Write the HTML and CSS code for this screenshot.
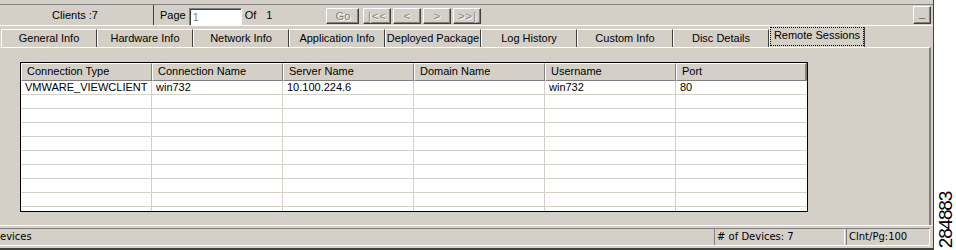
FILE: index.html
```html
<!DOCTYPE html>
<html>
<head>
<meta charset="utf-8">
<link rel="stylesheet" href="styles.css">
</head>
<body>
<div class="screen">
  <div class="app">
    <div class="toolbar">
      <div class="clients">Clients :7</div>
      <div class="pager">
        <span class="lbl">Page</span>
        <div class="pageinput">1</div>
        <span class="of">Of</span>
        <span class="total">1</span>
        <div class="navbtns">
          <div class="btn go">Go</div>
          <div class="btn">|&lt;&lt;</div>
          <div class="btn">&lt;</div>
          <div class="btn">&gt;</div>
          <div class="btn">&gt;&gt;|</div>
        </div>
      </div>
      <div class="minbtn"><span class="mintxt">_</span></div>
    </div>
    <div class="tabs">
      <div class="tab">General Info</div>
      <div class="tab">Hardware Info</div>
      <div class="tab">Network Info</div>
      <div class="tab">Application Info</div>
      <div class="tab">Deployed Package</div>
      <div class="tab">Log History</div>
      <div class="tab">Custom Info</div>
      <div class="tab">Disc Details</div>
      <div class="tab active"><span class="focus">Remote Sessions</span></div>
    </div>
    <div class="panel">
      <div class="grid">
        <div class="row head">
          <div class="hc">Connection Type</div>
          <div class="hc">Connection Name</div>
          <div class="hc">Server Name</div>
          <div class="hc">Domain Name</div>
          <div class="hc">Username</div>
          <div class="hc">Port</div>
        </div>
        <div class="row"><div class="c">VMWARE_VIEWCLIENT</div><div class="c">win732</div><div class="c">10.100.224.6</div><div class="c"></div><div class="c">win732</div><div class="c">80</div></div>
        <div class="row"><div class="c"></div><div class="c"></div><div class="c"></div><div class="c"></div><div class="c"></div><div class="c"></div></div>
        <div class="row"><div class="c"></div><div class="c"></div><div class="c"></div><div class="c"></div><div class="c"></div><div class="c"></div></div>
        <div class="row"><div class="c"></div><div class="c"></div><div class="c"></div><div class="c"></div><div class="c"></div><div class="c"></div></div>
        <div class="row"><div class="c"></div><div class="c"></div><div class="c"></div><div class="c"></div><div class="c"></div><div class="c"></div></div>
        <div class="row"><div class="c"></div><div class="c"></div><div class="c"></div><div class="c"></div><div class="c"></div><div class="c"></div></div>
        <div class="row"><div class="c"></div><div class="c"></div><div class="c"></div><div class="c"></div><div class="c"></div><div class="c"></div></div>
        <div class="row"><div class="c"></div><div class="c"></div><div class="c"></div><div class="c"></div><div class="c"></div><div class="c"></div></div>
        <div class="row"><div class="c"></div><div class="c"></div><div class="c"></div><div class="c"></div><div class="c"></div><div class="c"></div></div>
        <div class="row"><div class="c"></div><div class="c"></div><div class="c"></div><div class="c"></div><div class="c"></div><div class="c"></div></div>
      </div>
    </div>
    <div class="statuswrap">
      <div class="status">
        <div class="st-main">evices</div>
        <div class="st-cell devices"># of Devices: 7</div>
        <div class="st-cell perpage">Clnt/Pg:100</div>
      </div>
    </div>
  </div>
  <div class="fig"><span>284883</span></div>
</div>
</body>
</html>
```
FILE: styles.css
```css
* { box-sizing: border-box; margin: 0; padding: 0; }
body {
  margin: 0;
  background: #fff;
  font-family: "Liberation Sans", Arial, sans-serif;
  font-size: 11px;
  color: #000;
}
.screen { display: flex; width: 956px; height: 250px; }
.app {
  width: 934px;
  height: 250px;
  background: #d4d0c8;
  display: flex;
  flex-direction: column;
  border-right: 1px solid #404040;
}
.fig {
  flex: 1;
  display: flex;
  align-items: flex-end;
  justify-content: center;
  padding-bottom: 2px;
}
.fig span {
  writing-mode: vertical-rl;
  transform: rotate(180deg);
  font-family: "Liberation Sans", Arial, sans-serif;
  font-size: 19px;
  letter-spacing: -1.2px;
  line-height: 1;
}

/* toolbar */
.toolbar {
  margin-top: 4px;
  height: 22px;
  border-top: 1px solid #808080;
  border-bottom: 1px solid #fff;
  display: flex;
  align-items: stretch;
}
.clients {
  width: 154px;
  border-right: 1px solid #404040;
  display: flex;
  align-items: center;
  justify-content: center;
  padding-right: 3px;
}
.pager {
  display: flex;
  align-items: center;
  padding-left: 6px;
}
.pageinput {
  margin-left: 3px;
  margin-top: 4px;
  width: 53px;
  height: 18px;
  background: #fff;
  border-style: solid;
  border-width: 1px;
  border-color: #808080 #fff #fff #808080;
  box-shadow: inset 1px 1px #404040;
  color: #808080;
  padding-left: 3px;
  line-height: 17px;
}
.of { margin-left: 3px; }
.total { margin-left: 10px; }
.navbtns {
  display: flex;
  gap: 2px;
  margin-left: 54px;
  margin-top: 1px;
}
.btn {
  width: 28px;
  height: 16px;
  border-style: solid;
  border-width: 1px;
  border-color: #fff #404040 #404040 #fff;
  box-shadow: inset -1px -1px #808080;
  color: #808080;
  text-shadow: 1px 1px #fff;
  display: flex;
  align-items: center;
  justify-content: center;
  letter-spacing: 1px;
}
.btn.go { width: 33px; margin-right: 2px; letter-spacing: 0; }
.minbtn {
  margin-left: auto;
  margin-right: 2px;
  margin-top: 1px;
  width: 18px;
  height: 18px;
  border-style: solid;
  border-width: 1px;
  border-color: #fff #404040 #404040 #fff;
  box-shadow: inset -1px -1px #808080;
  display: flex;
  justify-content: center;
  overflow: hidden;
}
.mintxt {
  display: block;
  font-weight: bold;
  font-size: 11px;
  line-height: 11px;
  margin-top: 1px;
}

/* tabs */
.tabs {
  height: 21px;
  display: flex;
  align-items: flex-end;
  padding-left: 1px;
}
.tab {
  width: 96px;
  height: 18px;
  border-top: 1px solid #fff;
  border-left: 1px solid #fff;
  border-right: 1px solid #404040;
  text-align: center;
  line-height: 17px;
  white-space: nowrap;
  overflow: hidden;
}
.tab.active {
  height: 20px;
  border-top: none;
  padding-bottom: 1px;
}
.tab.active .focus {
  display: block;
  height: 19px;
  border: 1px dotted #000;
  line-height: 15px;
}

/* panel */
.panel {
  height: 178px;
  border-top: 1px solid #fff;
  border-right: 2px solid #808080;
  margin-right: 2px;
  padding: 14px 0 0 20px;
}
.grid {
  width: 788px;
  height: 150px;
  border: 1px solid #000;
  background: #fff;
  overflow: hidden;
}
.row {
  display: grid;
  grid-template-columns: repeat(6, 131px);
  height: 14px;
}
.row.head {
  height: 18px;
  background: #d4d0c8;
}
.hc {
  border-style: solid;
  border-width: 1px;
  border-color: #fff #808080 #808080 #fff;
  padding-left: 5px;
  line-height: 15px;
  white-space: nowrap;
  overflow: hidden;
}
.hc:last-child { border-right: 2px solid #808080; }
.c {
  border-right: 1px solid #d4d0c8;
  border-bottom: 1px solid #d4d0c8;
  padding-left: 4px;
  line-height: 13px;
  white-space: nowrap;
  overflow: hidden;
}
.c:last-child { border-right: none; }

/* status */
.statuswrap {
  border-top: 1px solid #fff;
  padding-top: 2px;
  height: 25px;
  border-bottom: 2px solid #404040;
  padding-bottom: 2px;
}
.status {
  display: flex;
  height: 18px;
  border-top: 1px solid #808080;
  border-bottom: 1px solid #fff;
  margin-right: 3px;
  font-family: "DejaVu Sans", Verdana, sans-serif;
  font-size: 10px;
}
.st-main {
  flex: 1;
  line-height: 16px;
}
.st-cell {
  border-left: 1px solid #808080;
  border-right: 1px solid #fff;
  padding-left: 2px;
  line-height: 16px;
  white-space: nowrap;
}
.st-cell.devices { width: 131px; }
.st-cell.perpage { width: 84px; margin-left: 1px; }
```
